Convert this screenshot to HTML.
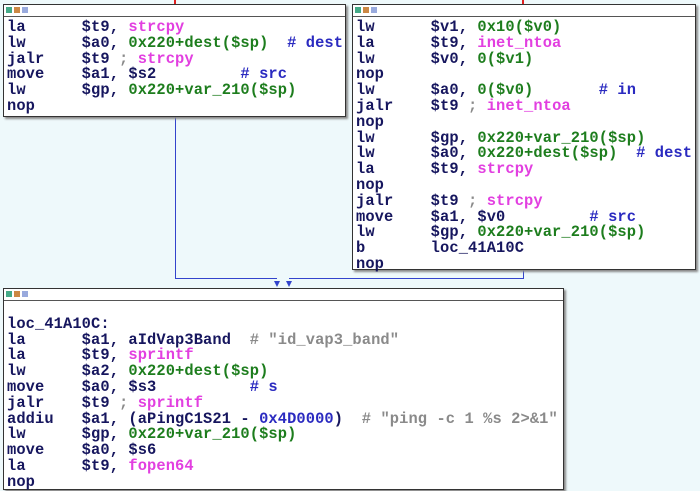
<!DOCTYPE html>
<html><head><style>
body{margin:0;width:700px;height:478px;background:#eef9fb;position:relative;overflow:hidden;font-family:"Liberation Mono",monospace;font-weight:bold;font-size:15.4px;}
.box{position:absolute;background:#fff;border:1px solid #333;box-shadow:2px 2px 2px #888;}
.hdr{height:11px;border-bottom:1px solid #555;position:relative;}
.hdr i{position:absolute;top:2px;width:6px;height:6px;}
pre{margin:0;padding-left:3px;padding-top:3px;font:inherit;line-height:15.8px;letter-spacing:0.1px;color:#16165e;}
.g{color:#1d7d1d}.p{color:#e23fe0}.c{color:#2a2ac0}.s{color:#8a8a8a}
.ln{position:absolute;background:#3344cc;}
</style></head><body>
<div class="ln" style="left:174px;top:0;width:2px;height:4px;background:#e02020"></div>
<div class="ln" style="left:522px;top:0;width:2px;height:4px;background:#e02020"></div>
<div class="ln" style="left:175px;top:116px;width:1px;height:163px"></div>
<div class="ln" style="left:175px;top:278px;width:102px;height:1px"></div>
<div class="ln" style="left:523px;top:270px;width:1px;height:9px"></div>
<div class="ln" style="left:289px;top:278px;width:235px;height:1px"></div>
<div style="position:absolute;left:274px;top:281px;border-left:3px solid transparent;border-right:3px solid transparent;border-top:6px solid #3344cc"></div>
<div style="position:absolute;left:286px;top:281px;border-left:3px solid transparent;border-right:3px solid transparent;border-top:6px solid #3344cc"></div>

<div class="box" style="left:3px;top:4px;width:341px;height:111px">
<div class="hdr"><i style="left:2px;background:#4a8"></i><i style="left:10px;background:#c84"></i><i style="left:18px;background:#9ad"></i></div>
<pre>la      $t9, <span class="p">strcpy</span>
lw      $a0, <span class="g">0x220+dest($sp)</span>  <span class="c"># dest</span>
jalr    $t9 <span class="s">;</span> <span class="p">strcpy</span>
move    $a1, $s2         <span class="c"># src</span>
lw      $gp, <span class="g">0x220+var_210($sp)</span>
nop</pre></div>

<div class="box" style="left:352px;top:4px;width:342px;height:264px">
<div class="hdr"><i style="left:2px;background:#4a8"></i><i style="left:10px;background:#c84"></i><i style="left:18px;background:#9ad"></i></div>
<pre>lw      $v1, <span class="g">0x10($v0)</span>
la      $t9, <span class="p">inet_ntoa</span>
lw      $v0, <span class="g">0($v1)</span>
nop
lw      $a0, <span class="g">0($v0)</span>       <span class="c"># in</span>
jalr    $t9 <span class="s">;</span> <span class="p">inet_ntoa</span>
nop
lw      $gp, <span class="g">0x220+var_210($sp)</span>
lw      $a0, <span class="g">0x220+dest($sp)</span>  <span class="c"># dest</span>
la      $t9, <span class="p">strcpy</span>
nop
jalr    $t9 <span class="s">;</span> <span class="p">strcpy</span>
move    $a1, $v0         <span class="c"># src</span>
lw      $gp, <span class="g">0x220+var_210($sp)</span>
b       loc_41A10C
nop</pre></div>

<div class="box" style="left:3px;top:288px;width:559px;height:200px">
<div class="hdr"><i style="left:2px;background:#4a8"></i><i style="left:10px;background:#c84"></i><i style="left:18px;background:#9ad"></i></div>
<pre style="padding-top:0">

loc_41A10C:
la      $a1, aIdVap3Band  <span class="s"># "id_vap3_band"</span>
la      $t9, <span class="p">sprintf</span>
lw      $a2, <span class="g">0x220+dest($sp)</span>
move    $a0, $s3          <span class="c"># s</span>
jalr    $t9 <span class="s">;</span> <span class="p">sprintf</span>
addiu   $a1, (aPingC1S21 - <span class="c">0x4D0000</span>)  <span class="s"># "ping -c 1 %s 2>&amp;1"</span>
lw      $gp, <span class="g">0x220+var_210($sp)</span>
move    $a0, $s6
la      $t9, <span class="p">fopen64</span>
nop</pre></div>
</body></html>
